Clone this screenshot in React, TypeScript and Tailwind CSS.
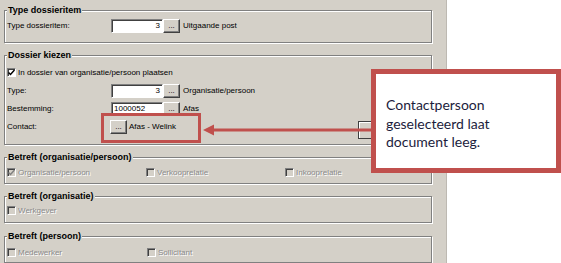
import type { ReactNode } from "react";

type groupProps = {
  title: string;
  className?: string;
  children: ReactNode;
};

const Group = ({ title, className, children }: groupProps) => {
  return (
    <div
      className={`w-[428px] border border-[#808080] shadow-[inset_1px_1px_0_#fff,1px_1px_0_#fff] ${className}`}
    >
      <div className="-mt-[6px] ml-[2px] w-fit bg-[#d4d0c8] px-[1px] text-[9px] font-bold leading-[11px] text-black">
        {title}
      </div>
      {children}
    </div>
  );
};

const Input = ({ value, left }: { value: string; left?: boolean }) => (
  <div
    className={`flex h-[14px] w-[52px] items-center border border-t-[#808080] border-l-[#808080] border-b-white border-r-white bg-white px-[2px] text-[8px] leading-none shadow-[inset_1px_1px_0_#404040] ${
      left ? "justify-start" : "justify-end"
    }`}
  >
    {value}
  </div>
);

const DotsButton = () => (
  <div className="flex h-[14px] w-[17px] items-end justify-center border border-t-white border-l-white border-b-[#404040] border-r-[#404040] bg-[#d4d0c8] pb-[2px] text-[8px] leading-none shadow-[inset_-1px_-1px_0_#808080]">
    ...
  </div>
);

const Check = ({ checked, disabled }: { checked?: boolean; disabled?: boolean }) => (
  <div
    className={`flex h-[9px] w-[9px] shrink-0 items-center justify-center border border-t-[#808080] border-l-[#808080] border-b-white border-r-white shadow-[inset_1px_1px_0_#404040] ${
      disabled ? "bg-[#d4d0c8]" : "bg-white"
    }`}
  >
    {checked && (
      <svg width="7" height="7" viewBox="0 0 7 7">
        <polyline
          points="0.5,3.5 2.5,5.5 6.5,1"
          fill="none"
          stroke={disabled ? "#808080" : "#000"}
          strokeWidth="1.5"
        />
      </svg>
    )}
  </div>
);

const CheckItem = ({
  label,
  checked,
  disabled,
  className,
}: {
  label: string;
  checked?: boolean;
  disabled?: boolean;
  className?: string;
}) => (
  <div className={`flex items-center ${className ?? ""}`}>
    <Check checked={checked} disabled={disabled} />
    <span
      className={`ml-[2px] text-[8px] leading-none ${
        disabled ? "text-[#8a8a8a] [text-shadow:1px_1px_0_#fff]" : "text-black"
      }`}
    >
      {label}
    </span>
  </div>
);

const App = () => {
  return (
    <div className="relative flex h-[263px] w-[561px] overflow-hidden bg-white font-['Liberation_Sans',Arial,sans-serif] text-black">
      <div className="h-[263px] w-[447px] shrink-0 border-r border-[#bdb9b2] bg-[#d4d0c8] pl-[4px] pt-[10px]">
        <Group title="Type dossieritem" className="h-[33px]">
          <div className="mt-[3px] flex h-[14px] items-center pl-[2px] text-[8px]">
            <span className="w-[104px]">Type dossieritem:</span>
            <Input value="3" />
            <DotsButton />
            <span className="ml-[3px]">Uitgaande post</span>
          </div>
        </Group>

        <Group title="Dossier kiezen" className="mt-[12px] h-[90px]">
          <div className="mt-[5px] flex h-[13px] items-center pl-[2px]">
            <CheckItem label="In dossier van organisatie/persoon plaatsen" checked />
          </div>
          <div className="mt-[5px] flex h-[14px] items-center pl-[2px] text-[8px]">
            <span className="w-[104px]">Type:</span>
            <Input value="3" />
            <DotsButton />
            <span className="ml-[3px]">Organisatie/persoon</span>
          </div>
          <div className="mt-[4px] flex h-[14px] items-center pl-[2px] text-[8px]">
            <span className="w-[104px]">Bestemming:</span>
            <Input value="1000052" left />
            <DotsButton />
            <span className="ml-[3px]">Afas</span>
          </div>
          <div className="mt-[4px] flex h-[14px] items-center pl-[2px] text-[8px]">
            <span className="w-[103px]">Contact:</span>
            <div className="h-[14px] w-[16px]">
              <DotsButton />
            </div>
            <span className="ml-[3px]">Afas - Welink</span>
            <div className="ml-auto mr-[8px] mt-[6px] h-[18px] w-[65px] border border-[#404040] bg-[#d4d0c8] shadow-[inset_1px_1px_0_#fff]" />
          </div>
        </Group>

        <Group title="Betreft (organisatie/persoon)" className="mt-[12px] h-[27px]">
          <div className="mt-[3px] flex h-[13px] items-center pl-[2px]">
            <CheckItem label="Organisatie/persoon" checked disabled className="w-[139px]" />
            <CheckItem label="Verkooprelatie" disabled className="w-[139px]" />
            <CheckItem label="Inkooprelatie" disabled />
          </div>
        </Group>

        <Group title="Betreft (organisatie)" className="mt-[12px] h-[27px]">
          <div className="mt-[2px] flex h-[13px] items-center pl-[2px]">
            <CheckItem label="Werkgever" disabled />
          </div>
        </Group>

        <Group title="Betreft (persoon)" className="mt-[13px] h-[27px]">
          <div className="mt-[4px] flex h-[13px] items-center pl-[2px]">
            <CheckItem label="Medewerker" disabled className="w-[140px]" />
            <CheckItem label="Sollicitant" disabled />
          </div>
        </Group>
      </div>

      {/* highlight around contact */}
      <div className="absolute left-[101px] top-[113px] h-[30px] w-[100px] border-[3px] border-[#c0504d]" />

      {/* arrow */}
      <svg
        className="absolute left-[200px] top-[123px]"
        width="174"
        height="14"
        viewBox="0 0 174 14"
      >
        <line x1="12" y1="7" x2="174" y2="7" stroke="#c0504d" strokeWidth="3" />
        <polygon points="3,7 14,1.5 14,12.5" fill="#c0504d" />
      </svg>

      {/* callout */}
      <div className="absolute left-[371px] top-[69px] h-[104px] w-[190px] border-[5px] border-[#c0504d] bg-white pl-[10px] pt-[22px] font-['Lato',sans-serif] text-[14px] leading-[18.5px] text-[#1c1c3c]">
        <div>Contactpersoon</div>
        <div>geselecteerd laat</div>
        <div>document leeg.</div>
      </div>
    </div>
  );
};

export default App;
